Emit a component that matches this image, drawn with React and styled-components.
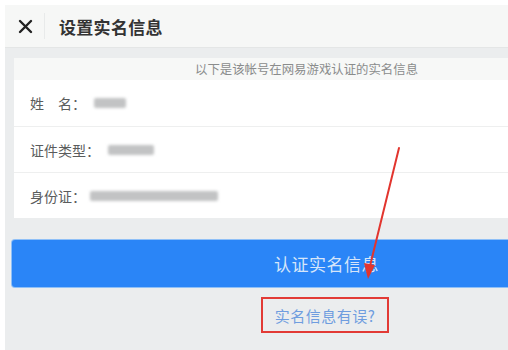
import React from "react"
import styled, { createGlobalStyle } from "styled-components"

const GlobalStyle = createGlobalStyle`
  html, body {
    margin: 0;
    padding: 0;
    background: #fff;
    overflow: hidden;
  }
  body {
    font-family: "Noto Sans CJK SC", "Noto Sans", sans-serif;
  }
`

const rows = [
  { label: "姓\u3000名：", width: 32, offset: 8 },
  { label: "证件类型：", width: 46, offset: 8 },
  { label: "身份证：", width: 128, offset: 4 },
]

const App = () => {
  return (
    <>
      <GlobalStyle />
      <Frame>
        <Screen>
          <Header>
            <Close>
              <svg width="15" height="15" viewBox="0 0 15 15">
                <path d="M2 2 L13 13 M13 2 L2 13" stroke="#222" strokeWidth="2.4" strokeLinecap="round" />
              </svg>
            </Close>
            <Divider />
            <Title>设置实名信息</Title>
          </Header>
          <Card>
            <Notice>以下是该帐号在网易游戏认证的实名信息</Notice>
            {rows.map((row) => (
              <Row key={row.label}>
                <Label>{row.label}</Label>
                <Blurred $width={row.width} $offset={row.offset} />
              </Row>
            ))}
          </Card>
          <Button>认证实名信息</Button>
          <LinkWrap>
            <ErrorLink>实名信息有误?</ErrorLink>
          </LinkWrap>
        </Screen>
        <Arrow width="508" height="350" viewBox="0 0 508 350">
          <line x1="399" y1="148" x2="370" y2="266" stroke="#e2352e" strokeWidth="2" strokeLinecap="round" />
          <path d="M364 263 L368 279 L375 265 Z" fill="#e2352e" />
        </Arrow>
      </Frame>
    </>
  )
}

export default App

const Frame = styled.div`
  position: relative;
  width: 508px;
  height: 350px;
  padding: 5px 3px 0 5px;
  box-sizing: border-box;
  overflow: hidden;
`

const Screen = styled.div`
  width: 640px;
  height: 345px;
  background: #ebedee;
`

const Header = styled.div`
  height: 43px;
  display: flex;
  align-items: center;
  background: #f6f7f6;
  border-bottom: 1px solid #e4e6e6;
  box-sizing: border-box;
`

const Close = styled.div`
  width: 37px;
  display: flex;
  justify-content: center;
  padding-left: 2px;
  svg {
    display: block;
  }
`

const Divider = styled.div`
  width: 1px;
  height: 26px;
  background: #e8eaea;
`

const Title = styled.div`
  margin-left: 14px;
  font-size: 17px;
  font-weight: 700;
  color: #333;
  letter-spacing: 0.3px;
`

const Card = styled.div`
  margin: 10px 0 0 9px;
  background: #fff;
`

const Notice = styled.div`
  height: 22px;
  line-height: 22px;
  background: #f7f8f7;
  font-size: 12.4px;
  color: #8a8c8c;
  padding-left: 181px;
`

const Row = styled.div`
  height: 46px;
  display: flex;
  align-items: center;
  padding-left: 16px;
  border-top: 1px solid #eeefef;
  box-sizing: border-box;
  &:nth-child(2) {
    border-top: none;
  }
`

const Label = styled.span`
  font-size: 14px;
  color: #5a5c5c;
`

const Blurred = styled.span`
  display: inline-block;
  width: ${(p) => p.$width}px;
  height: 10px;
  margin-left: ${(p) => p.$offset}px;
  background: #c2c3c4;
  border-radius: 2px;
  filter: blur(1.5px);
`

const Button = styled.div`
  margin: 22px 0 0 7px;
  height: 47px;
  display: flex;
  align-items: center;
  justify-content: center;
  padding-right: 4px;
  background: #2a85f7;
  border-radius: 3px;
  box-shadow: 0 0 0 1px #8fc0f7;
  color: #d6e5fa;
  font-size: 17px;
  letter-spacing: 0.5px;
`

const LinkWrap = styled.div`
  display: flex;
  justify-content: center;
  padding: 10px 0 0 0;
`

const ErrorLink = styled.div`
  width: 124px;
  height: 32px;
  border: 2px solid #e23a35;
  display: flex;
  align-items: center;
  justify-content: center;
  font-size: 15px;
  color: #6f9ddf;
  letter-spacing: 0.5px;
`

const Arrow = styled.svg`
  position: absolute;
  left: 0;
  top: 0;
  pointer-events: none;
`
